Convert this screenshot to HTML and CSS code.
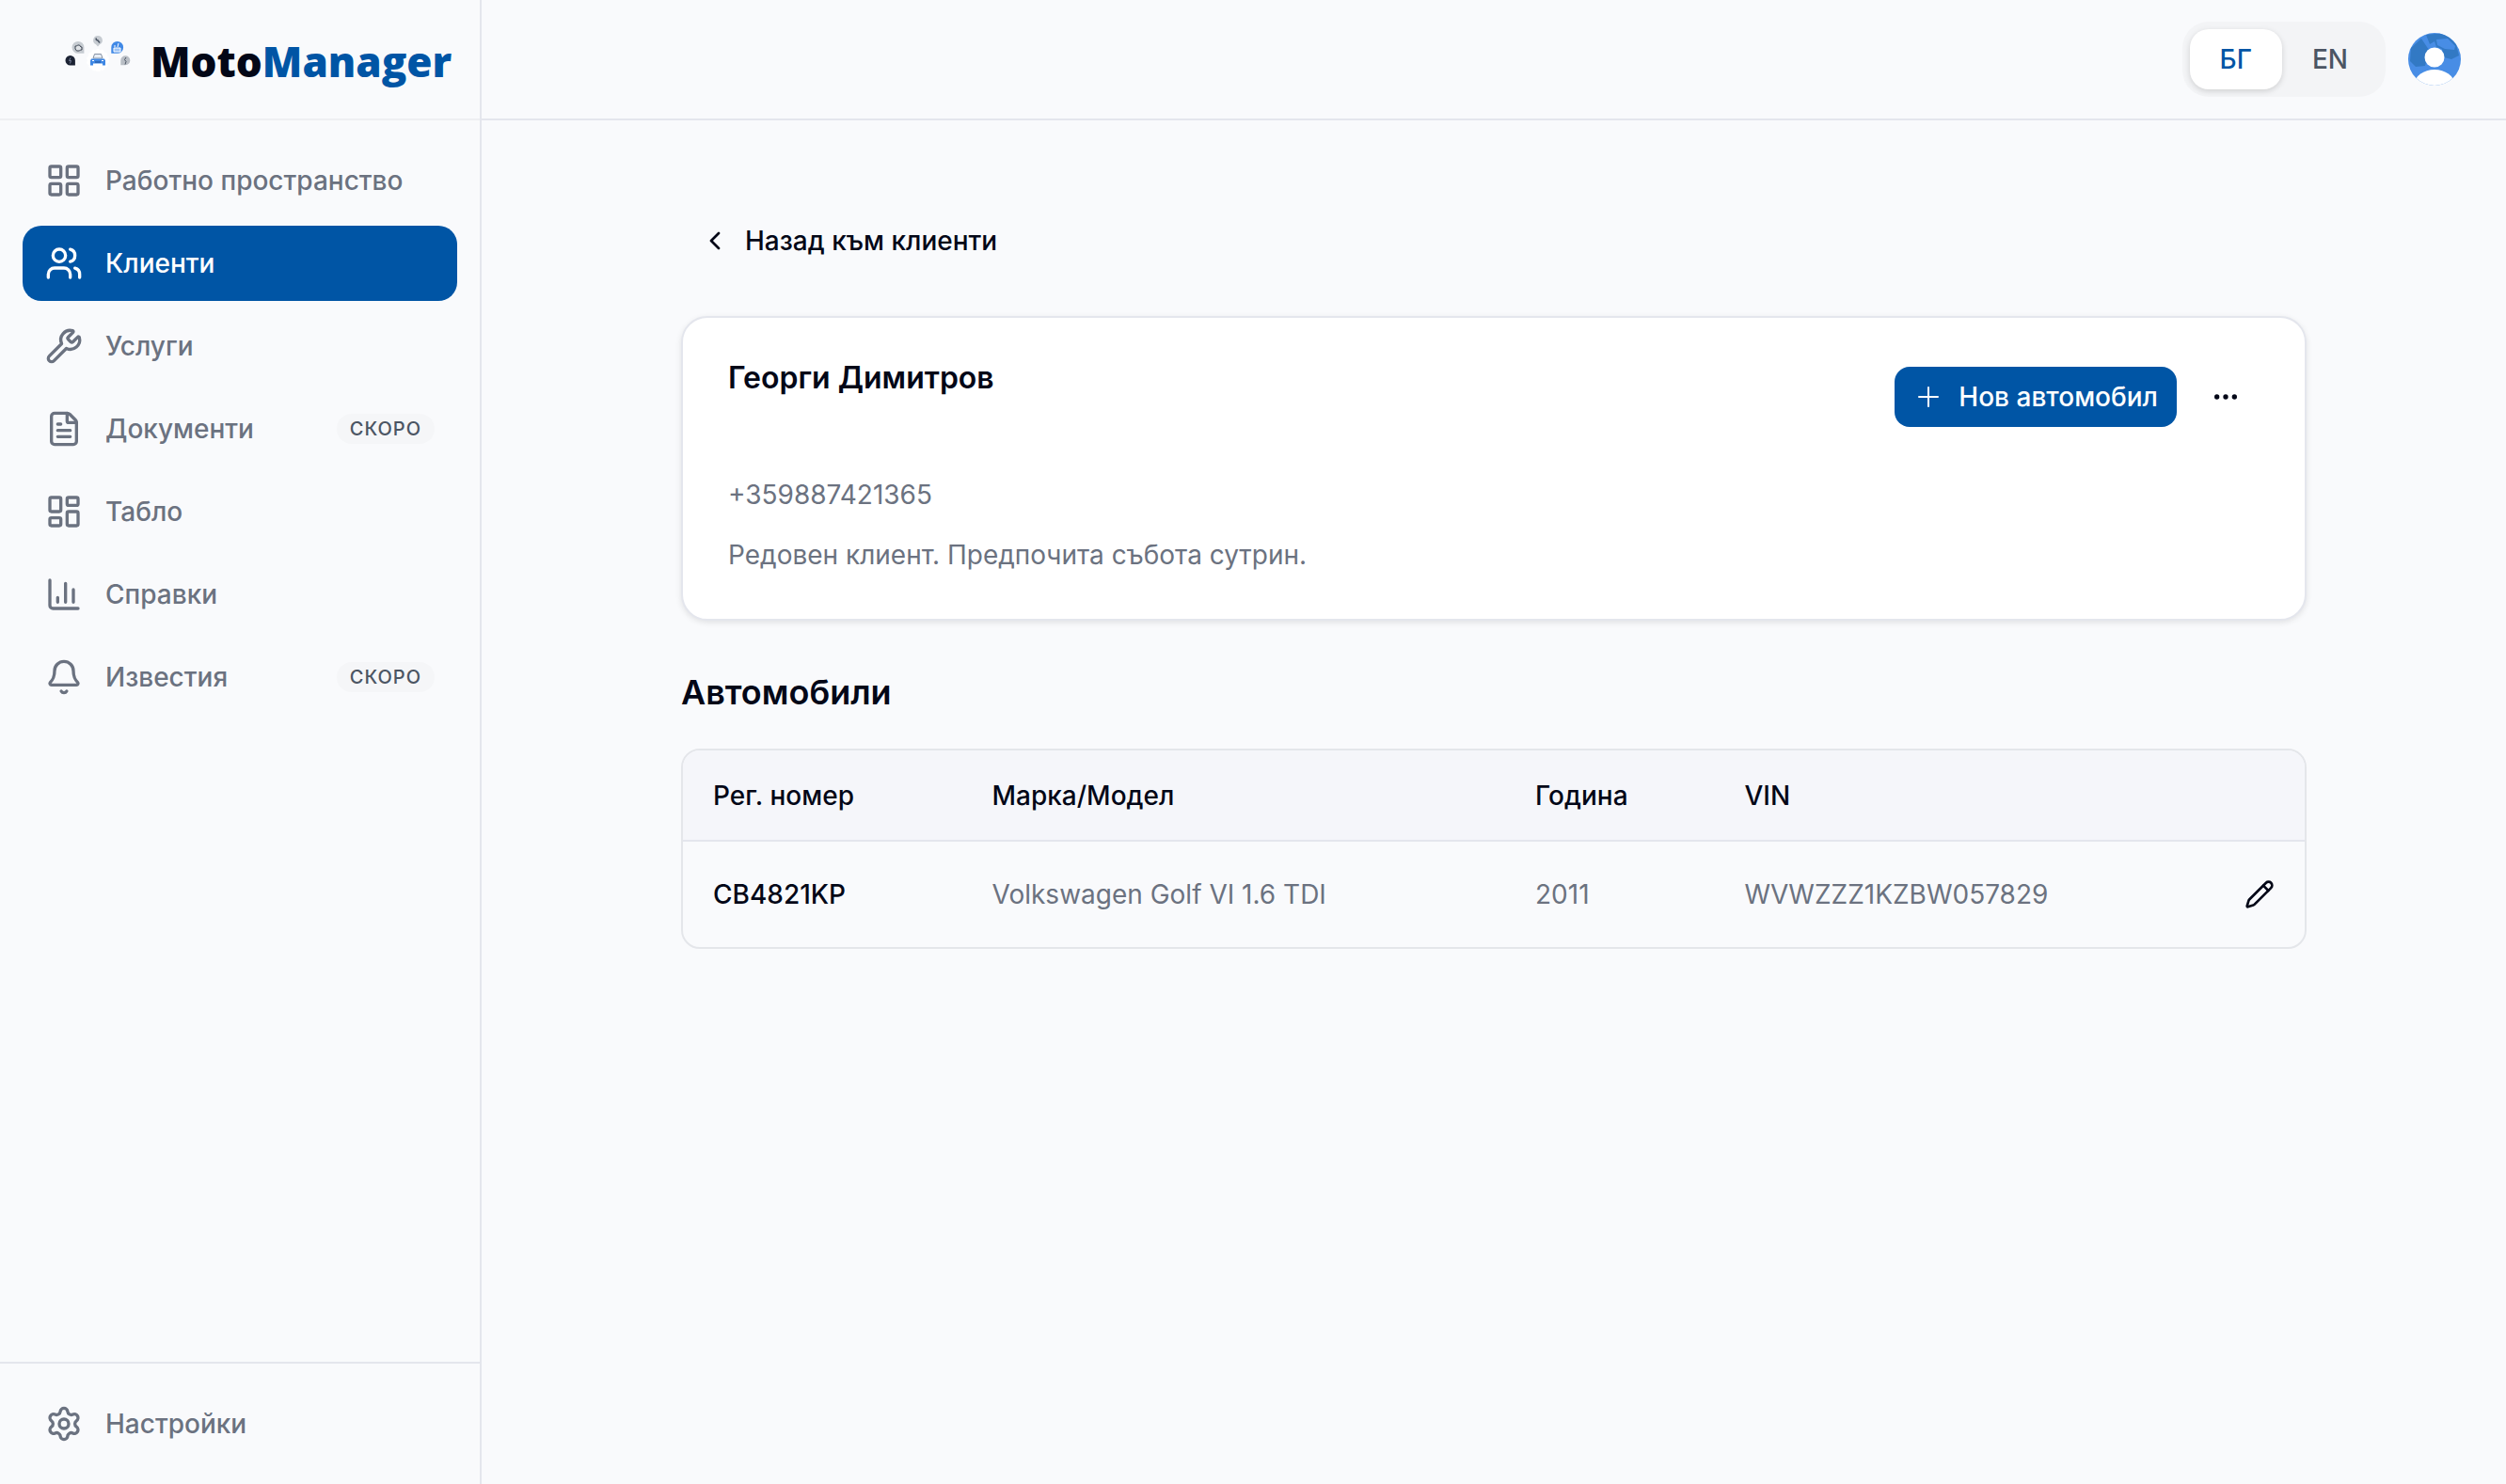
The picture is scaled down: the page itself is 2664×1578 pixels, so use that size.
FILE: index.html
```html
<!DOCTYPE html>
<html lang="bg">

<head>
    <meta charset="UTF-8">
    <meta name="viewport" content="width=device-width, initial-scale=1.0">
    <title>Георги Димитров - MotoManager</title>
    <link rel="stylesheet" href="styles.css">
</head>

<body>
    <div class="app">
        <aside class="sidebar">
            <a href="#" class="brand">
                <svg class="brand-logo" viewBox="64 23 80 80" aria-hidden="true">
                    <circle cx="104" cy="64" r="11" fill="#fff" stroke="#fff" stroke-width="2" stroke-dasharray="3 2" />
                    <circle cx="104" cy="72" r="4" fill="#fff" />
                    <path d="M74.7 59a5.2 5.2 0 1 0 0 10.4h5.2v-5.2a5.2 5.2 0 0 0-5.2-5.2z" fill="#1b2233" />
                    <path d="M75 61.500l-1.500 3h2l-1 3" stroke="#77809a" fill="none" />
                    <path d="M83 44a6.400 6.400 0 1 0 0 12.800h6.400v-6.400A6.400 6.400 0 0 0 83 44z" fill="#c6cbd1" />
                    <path d="M80 49h1.500l1-1h2l1.500 2h1v3h-1.500l-1 1h-3l-1.500-2z" fill="#dfe2e6" stroke="#3b4350" />
                    <path d="M104 38a4.800 4.800 0 0 1 2 9.200l-2 2.300-2-2.300a4.800 4.800 0 0 1 2-9.200z" fill="#c6cbd1" />
                    <path d="M102 40.500l.5 2 1.500.5 2 2.500" stroke="#4b5563" stroke-width="1.500" fill="none" />
                    <path d="M124.700 44a6.400 6.400 0 1 1 0 12.800h-6.400v-6.400a6.400 6.400 0 0 1 6.400-6.400z" fill="#4189e6" />
                    <path d="M121 51h7v4h-7zM122 50v-2M125 50l1-4" fill="#9cc3f5" stroke="#fff" />
                    <path d="M133.300 59.200a5 5 0 1 1 0 10h-5v-5a5 5 0 0 1 5-5z" fill="#b9bec5" />
                    <path d="M134 61l-1.500 2.500 1.500 2-1 3" stroke="#4b5563" fill="none" />
                    <path d="M99 62l1.500-4.500h7L109 62z" fill="#e8eef6" stroke="#8793a3" />
                    <path d="M97 62.500h14l1 2v5h-3v-2H99v2h-3v-5z" fill="#3f87e4" />
                    <path d="M98 64.500h2M108 64.500h2" stroke="#fff" />
                    <path d="M101 66h6" stroke="#1e4f94" />
                </svg>
                <span class="brand-name">Moto<span class="brand-accent">Manager</span></span>
            </a>

            <nav class="nav">
                <a href="#" class="nav-item">
                    <svg class="icon" viewBox="0 0 24 24">
                        <rect x="3" y="3" width="7" height="7" rx="1" />
                        <rect x="14" y="3" width="7" height="7" rx="1" />
                        <rect x="14" y="14" width="7" height="7" rx="1" />
                        <rect x="3" y="14" width="7" height="7" rx="1" />
                    </svg>
                    <span>Работно пространство</span>
                </a>
                <a href="#" class="nav-item active" aria-current="page">
                    <svg class="icon" viewBox="0 0 24 24">
                        <path d="M16 21v-2a4 4 0 0 0-4-4H6a4 4 0 0 0-4 4v2" />
                        <path d="M16 3.128a4 4 0 0 1 0 7.744" />
                        <path d="M22 21v-2a4 4 0 0 0-3-3.870" />
                        <circle cx="9" cy="7" r="4" />
                    </svg>
                    <span>Клиенти</span>
                </a>
                <a href="#" class="nav-item">
                    <svg class="icon" viewBox="0 0 24 24">
                        <path d="M14.700 6.300a1 1 0 0 0 0 1.400l1.600 1.600a1 1 0 0 0 1.400 0l3.106-3.105c.32-.322.863-.22.983.218a6 6 0 0 1-8.259 7.057l-7.910 7.910a1 1 0 0 1-2.999-3l7.910-7.910a6 6 0 0 1 7.057-8.259c.438.12.54.662.219.984z" />
                    </svg>
                    <span>Услуги</span>
                </a>
                <a href="#" class="nav-item">
                    <svg class="icon" viewBox="0 0 24 24">
                        <path d="M6 22a2 2 0 0 1-2-2V4a2 2 0 0 1 2-2h8a2.400 2.400 0 0 1 1.704.706l3.588 3.588A2.400 2.400 0 0 1 20 8v12a2 2 0 0 1-2 2z" />
                        <path d="M14 2v5a1 1 0 0 0 1 1h5M10 9H8M16 13H8M16 17H8" />
                    </svg>
                    <span>Документи</span>
                    <span class="badge">СКОРО</span>
                </a>
                <a href="#" class="nav-item">
                    <svg class="icon" viewBox="0 0 24 24">
                        <rect x="3" y="3" width="7" height="9" rx="1" />
                        <rect x="14" y="3" width="7" height="5" rx="1" />
                        <rect x="14" y="12" width="7" height="9" rx="1" />
                        <rect x="3" y="16" width="7" height="5" rx="1" />
                    </svg>
                    <span>Табло</span>
                </a>
                <a href="#" class="nav-item">
                    <svg class="icon" viewBox="0 0 24 24">
                        <path d="M3 3v16a2 2 0 0 0 2 2h16M18 17V9M13 17V5M8 17v-3" />
                    </svg>
                    <span>Справки</span>
                </a>
                <a href="#" class="nav-item">
                    <svg class="icon" viewBox="0 0 24 24">
                        <path d="M10.268 21a2 2 0 0 0 3.464 0" />
                        <path d="M3.262 15.326A1 1 0 0 0 4 17h16a1 1 0 0 0 .740-1.673C19.410 13.956 18 12.499 18 8A6 6 0 0 0 6 8c0 4.499-1.411 5.956-2.738 7.326" />
                    </svg>
                    <span>Известия</span>
                    <span class="badge">СКОРО</span>
                </a>
            </nav>

            <div class="sidebar-footer">
                <a href="#" class="nav-item">
                    <svg class="icon" viewBox="0 0 24 24">
                        <path d="M9.671 4.136a2.340 2.340 0 0 1 4.659 0 2.340 2.340 0 0 0 3.319 1.915 2.340 2.340 0 0 1 2.330 4.033 2.340 2.340 0 0 0 0 3.831 2.340 2.340 0 0 1-2.330 4.033 2.340 2.340 0 0 0-3.319 1.915 2.340 2.340 0 0 1-4.659 0 2.340 2.340 0 0 0-3.320-1.915 2.340 2.340 0 0 1-2.330-4.033 2.340 2.340 0 0 0 0-3.831A2.340 2.340 0 0 1 6.350 6.051a2.340 2.340 0 0 0 3.319-1.915" />
                        <circle cx="12" cy="12" r="3" />
                    </svg>
                    <span>Настройки</span>
                </a>
            </div>
        </aside>

        <div class="page">
            <header class="topbar">
                <div class="lang-switch">
                    <button type="button" class="lang active">БГ</button>
                    <button type="button" class="lang">EN</button>
                </div>
                <button type="button" class="avatar" aria-label="Профил">
                    <svg viewBox="0 0 56 56">
                        <rect width="56" height="56" fill="#488de5" />
                        <path d="M3 16L14 6l8 12-4 17-10 1-6-6z" fill="#3279c4" />
                        <path d="M19 2l20-2 12 12 3 12-8 4-8-2-2-9-6-2-2-6-5 3z" fill="#3279c4" />
                        <path d="M30 7l12-1 8 8-1 4-10-1-8-4z" fill="#488de5" />
                        <circle cx="28" cy="26" r="10.500" fill="#fff" />
                        <ellipse cx="28" cy="54" rx="21" ry="15" fill="#fff" />
                    </svg>
                </button>
            </header>

            <main class="content">
                <a href="#" class="back-link">
                    <svg class="icon-sm" viewBox="0 0 24 24">
                        <path d="m15 18-6-6 6-6" />
                    </svg>
                    Назад към клиенти
                </a>

                <section class="card">
                    <div class="card-header">
                        <h1>Георги Димитров</h1>
                        <div class="card-actions">
                            <button type="button" class="btn-primary">
                                <svg class="icon-sm thin" viewBox="0 0 24 24">
                                    <path d="M12 4.500v15m7.500-7.500h-15" />
                                </svg>
                                Нов автомобил
                            </button>
                            <button type="button" class="btn-icon" aria-label="Още">
                                <svg class="icon-sm" viewBox="0 0 24 24">
                                    <circle cx="12" cy="12" r="1" />
                                    <circle cx="19" cy="12" r="1" />
                                    <circle cx="5" cy="12" r="1" />
                                </svg>
                            </button>
                        </div>
                    </div>
                    <div class="card-body">
                        <p>+359887421365</p>
                        <p>Редовен клиент. Предпочита събота сутрин.</p>
                    </div>
                </section>

                <h2>Автомобили</h2>

                <div class="table-wrap">
                    <table>
                        <thead>
                            <tr>
                                <th class="col-plate">Рег. номер</th>
                                <th class="col-model">Марка/Модел</th>
                                <th class="col-year">Година</th>
                                <th>VIN</th>
                                <th class="col-actions"></th>
                            </tr>
                        </thead>
                        <tbody>
                            <tr>
                                <td class="plate">CB4821KP</td>
                                <td>Volkswagen Golf VI 1.6 TDI</td>
                                <td>2011</td>
                                <td>WVWZZZ1KZBW057829</td>
                                <td class="row-actions">
                                    <button type="button" class="btn-edit" aria-label="Редактирай">
                                        <svg class="icon-sm" viewBox="0 0 24 24">
                                            <path d="M21.174 6.812a1 1 0 0 0-3.986-3.987L3.842 16.174a2 2 0 0 0-.5.83l-1.321 4.352a.5.5 0 0 0 .623.622l4.353-1.320a2 2 0 0 0 .830-.497z" />
                                            <path d="m15 5 4 4" />
                                        </svg>
                                    </button>
                                </td>
                            </tr>
                        </tbody>
                    </table>
                </div>
            </main>
        </div>
    </div>
</body>

</html>
```
FILE: styles.css
```css
* {
    box-sizing: border-box;
    margin: 0;
    padding: 0;
}

body {
    font-family: Inter, sans-serif;
    font-size: 28px;
    line-height: 40px;
    color: #030717;
    background-color: #f9fafc;
}

a {
    color: inherit;
    text-decoration: none;
}

button {
    font: inherit;
    color: inherit;
    background: none;
    border: none;
    cursor: pointer;
}

svg {
    display: block;
    flex-shrink: 0;
}

.icon,
.icon-sm {
    width: 40px;
    height: 40px;
    fill: none;
    stroke: currentColor;
    stroke-width: 2;
    stroke-linecap: round;
    stroke-linejoin: round;
}

.icon-sm {
    width: 32px;
    height: 32px;
}

.thin {
    stroke-width: 1.5;
}

.app {
    display: flex;
    min-height: 100vh;
}

/* Sidebar */
.sidebar {
    display: flex;
    flex-direction: column;
    flex-shrink: 0;
    width: 512px;
    border-right: 2px solid #e4e6ed;
}

.brand {
    display: flex;
    align-items: center;
    gap: 16px;
    height: 128px;
    padding-left: 64px;
    border-bottom: 2px solid #eeeff2;
}

.brand-logo {
    width: 80px;
    height: 80px;
}

.brand-name {
    padding-top: 4px;
    font-family: "Open Sans", sans-serif;
    font-size: 44px;
    font-weight: 800;
    line-height: 56px;
}

.brand-accent {
    color: #0055a5;
}

.nav {
    display: flex;
    flex: 1;
    flex-direction: column;
    gap: 8px;
    padding: 24px;
}

.nav-item {
    display: flex;
    align-items: center;
    gap: 24px;
    height: 80px;
    padding: 0 24px;
    border-radius: 20px;
    color: #6b7280;
    font-weight: 500;
}

.nav-item.active {
    background-color: #0055a5;
    color: #fff;
}

.badge {
    margin-left: auto;
    padding: 0 14px;
    border-radius: 16px;
    background-color: #f5f6f8;
    color: #4b5563;
    font-size: 20px;
    line-height: 32px;
    letter-spacing: 1px;
}

.sidebar-footer {
    padding: 24px;
    border-top: 2px solid #e4e6ed;
}

/* Top bar */
.page {
    flex: 1;
    min-width: 0;
}

.topbar {
    display: flex;
    align-items: center;
    justify-content: flex-end;
    gap: 24px;
    height: 128px;
    padding: 0 48px;
    border-bottom: 2px solid #e4e6ed;
}

.lang-switch {
    display: flex;
    padding: 8px;
    border-radius: 28px;
    background-color: #f3f4f6;
}

.lang {
    height: 64px;
    padding: 0 32px;
    border-radius: 20px;
    color: #4b5563;
    font-weight: 500;
}

.lang.active {
    background-color: #fff;
    color: #0055a5;
    box-shadow: 0 2px 6px rgba(0, 0, 0, 0.15);
}

.avatar {
    width: 56px;
    height: 56px;
    border-radius: 50%;
    overflow: hidden;
}

/* Client page */
.content {
    max-width: 1792px;
    margin: 0 auto;
    padding: 88px 32px;
}

.back-link {
    display: inline-flex;
    align-items: center;
    gap: 16px;
    height: 80px;
    margin-bottom: 40px;
    padding: 0 20px;
    font-weight: 500;
    vertical-align: top;
}

.card {
    padding: 48px;
    border: 2px solid #e4e6ed;
    border-radius: 28px;
    background-color: #fff;
    box-shadow: 0 2px 6px rgba(0, 0, 0, 0.1);
}

.card-header {
    display: flex;
    align-items: flex-start;
    justify-content: space-between;
    margin-bottom: 48px;
}

h1 {
    font-size: 32px;
    font-weight: 600;
    line-height: 32px;
}

.card-actions {
    display: flex;
    align-items: center;
    gap: 16px;
}

.btn-primary {
    display: flex;
    align-items: center;
    gap: 16px;
    height: 64px;
    padding: 0 20px;
    border-radius: 16px;
    background-color: #0055a5;
    color: #fff;
    font-weight: 500;
}

.btn-icon {
    display: flex;
    align-items: center;
    justify-content: center;
    width: 72px;
    height: 72px;
}

.card-body {
    display: flex;
    flex-direction: column;
    gap: 24px;
    color: #6b7280;
}

h2 {
    margin: 48px 0 32px;
    font-size: 36px;
    font-weight: 600;
    line-height: 56px;
}

.table-wrap {
    border: 2px solid #e4e6ea;
    border-radius: 20px;
    overflow: hidden;
}

table {
    width: 100%;
    border-collapse: collapse;
    table-layout: fixed;
}

th,
td {
    height: 113px;
    padding: 0 32px;
    text-align: left;
    color: #6b7280;
}

th {
    height: 96px;
    border-bottom: 2px solid #e4e6ed;
    background-color: #f5f6fa;
    color: #030717;
    font-weight: 500;
}

.col-plate {
    width: 17.2%;
}

.col-model {
    width: 33.5%;
}

.col-year {
    width: 12.9%;
}

.col-actions {
    width: 96px;
}

.plate {
    color: #030717;
    font-weight: 500;
}

.btn-edit {
    display: block;
    color: #030717;
}
```
